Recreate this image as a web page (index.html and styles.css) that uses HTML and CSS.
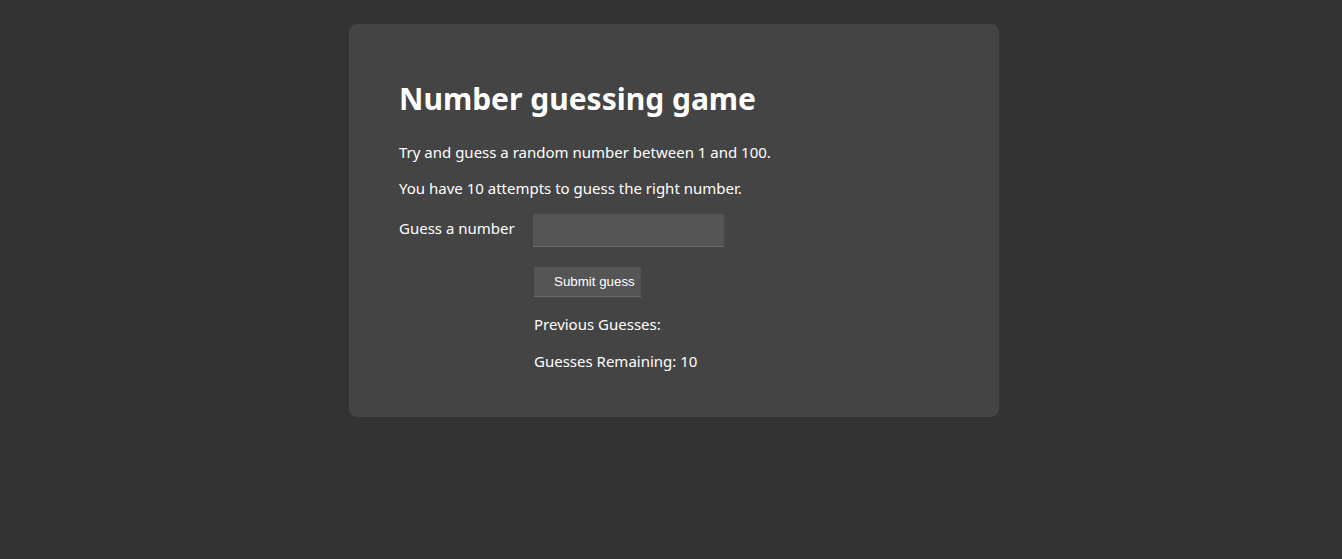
FILE: index.html
```html
<!DOCTYPE html>
<html lang="en">
<head>
<meta charset="utf-8">
<title>Number guessing game</title>
<link rel="stylesheet" href="styles.css">
</head>
<body>
<main class="card">
  <h1 class="title">Number guessing game</h1>
  <p class="intro">Try and guess a random number between 1 and 100.</p>
  <p class="intro second">You have 10 attempts to guess the right number.</p>
  <div class="form-row">
    <label class="label" for="guessField">Guess a number</label>
    <input class="guess-field" type="number" id="guessField">
  </div>
  <div class="actions">
    <button class="submit">Submit guess</button>
    <p class="status prev">Previous Guesses:</p>
    <p class="status remaining">Guesses Remaining: 10</p>
  </div>
</main>
</body>
</html>
```

FILE: styles.css
```css
html, body {
  margin: 0;
  padding: 0;
  background: #333333;
  font-family: "Noto Sans", "Open Sans", sans-serif;
  color: #ffffff;
}

body {
  display: flex;
  justify-content: center;
  padding: 24px 0 0 6px;
}

.card {
  width: 650px;
  box-sizing: border-box;
  background: #444444;
  border-radius: 8px;
  padding: 56px 50px 44px;
}

.title {
  margin: 0;
  font-size: 30px;
  line-height: 38px;
  font-weight: 700;
}

.intro {
  margin: 22px 0 0;
  font-size: 15px;
  line-height: 24px;
}

.intro.second {
  margin-top: 12px;
}

.form-row {
  display: flex;
  align-items: flex-start;
  margin-top: 14px;
  gap: 20px;
}

.label {
  font-size: 15px;
  line-height: 24px;
  width: 114px;
  white-space: nowrap;
  padding-top: 2px;
}

.guess-field {
  width: 191px;
  height: 33px;
  box-sizing: border-box;
  background: #555555;
  border: none;
  border-bottom: 1px solid #6a6a6a;
  color: #fff;
  outline: none;
}

.actions {
  margin-left: 135px;
  display: flex;
  flex-direction: column;
  align-items: flex-start;
}

.submit {
  margin-top: 20px;
  height: 30px;
  padding: 0 6px 0 20px;
  background: #555555;
  border: none;
  border-bottom: 1px solid #6a6a6a;
  color: #ffffff;
  font-family: "Liberation Sans", Arial, sans-serif;
  font-size: 13.333px;
}

.status {
  margin: 15px 0 0;
  font-size: 15px;
  line-height: 24px;
}

.status.remaining {
  margin-top: 13px;
}
```
